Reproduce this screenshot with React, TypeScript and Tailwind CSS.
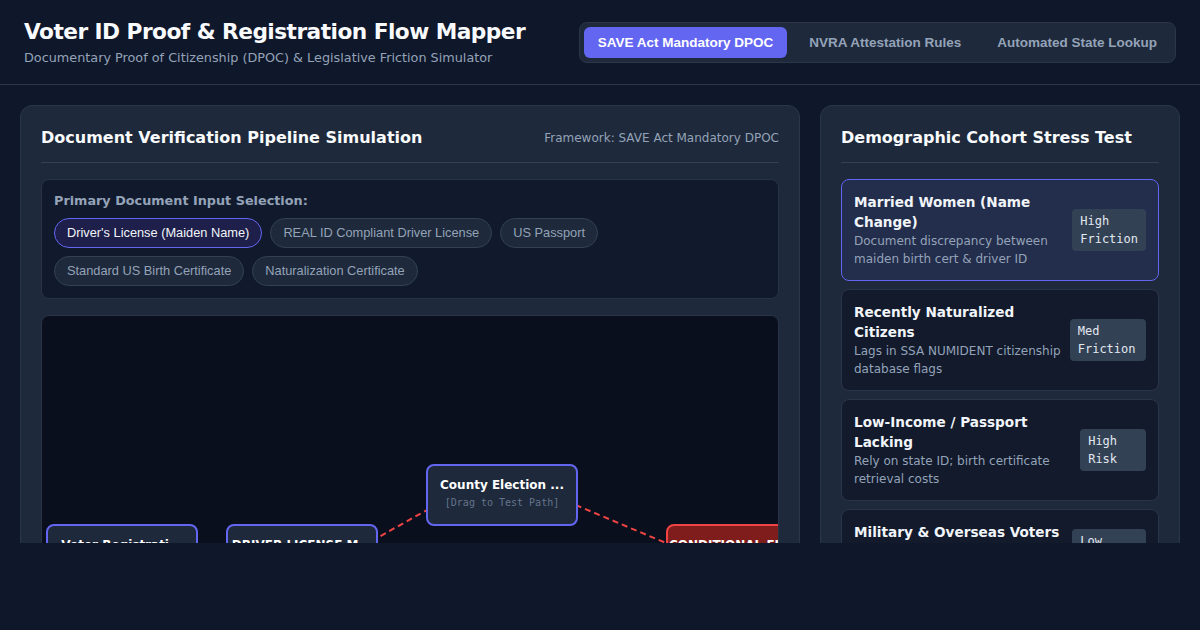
import { useState } from "react";

type Cohort = {
  title: string;
  desc: string;
  badge: string;
};

type FlowNode = {
  id: string;
  label: string;
  left: number;
  top: number;
  flagged?: boolean;
};

const frameworks = ["SAVE Act Mandatory DPOC", "NVRA Attestation Rules", "Automated State Lookup"];

const documents = [
  "Driver's License (Maiden Name)",
  "REAL ID Compliant Driver License",
  "US Passport",
  "Standard US Birth Certificate",
  "Naturalization Certificate",
];

const cohorts: Cohort[] = [
  {
    title: "Married Women (Name Change)",
    desc: "Document discrepancy between maiden birth cert & driver ID",
    badge: "High Friction",
  },
  {
    title: "Recently Naturalized Citizens",
    desc: "Lags in SSA NUMIDENT citizenship database flags",
    badge: "Med Friction",
  },
  {
    title: "Low-Income / Passport Lacking",
    desc: "Rely on state ID; birth certificate retrieval costs",
    badge: "High Risk",
  },
  {
    title: "Military & Overseas Voters",
    desc: "UOCAVA ballots exempt from in-person DPOC checks",
    badge: "Low Friction",
  },
];

const nodes: FlowNode[] = [
  { id: "reg", label: "Voter Registration Form", left: 4, top: 208 },
  { id: "doc", label: "DRIVER LICENSE MAIDEN NAME", left: 184, top: 208 },
  { id: "county", label: "County Election Office", left: 384, top: 148 },
  { id: "flag", label: "CONDITIONAL FLAG / REJECTED", left: 624, top: 208, flagged: true },
];

// straight dashed connectors, drawn under the nodes
const edges = [
  { x1: 80, y1: 264, x2: 260, y2: 264 },
  { x1: 260, y1: 264, x2: 460, y2: 152 },
  { x1: 460, y1: 158, x2: 700, y2: 259 },
];

const shorten = (s: string) => (s.length > 16 ? s.slice(0, 16) + "..." : s);

function FlowCanvas() {
  return (
    <div className="relative mt-4 h-[420px] overflow-hidden rounded-lg border border-[#283346] bg-[#0a0f1d]">
      <svg className="absolute inset-0 h-full w-full">
        {edges.map((e, i) => (
          <line
            key={i}
            x1={e.x1}
            y1={e.y1}
            x2={e.x2}
            y2={e.y2}
            stroke="#ef4444"
            strokeWidth={2}
            strokeDasharray="6 4"
          />
        ))}
      </svg>
      {nodes.map((n) => (
        <div
          key={n.id}
          className={
            n.flagged
              ? "absolute flex h-[62px] w-[152px] flex-col items-center rounded-lg border-2 border-[#ef4444] bg-[#7f1d1d] pt-[10px]"
              : "absolute flex h-[62px] w-[152px] flex-col items-center rounded-lg border-2 border-[#6366f1] bg-[#1e293b] pt-[10px]"
          }
          style={{ left: n.left, top: n.top }}
        >
          <span className="whitespace-nowrap text-[12px] font-bold leading-[18px] text-white">
            {shorten(n.label)}
          </span>
          <span className="mt-0.5 whitespace-nowrap font-['DejaVu_Sans_Mono',monospace] text-[10px] leading-[14px] text-[#64748b]">
            [Drag to Test Path]
          </span>
        </div>
      ))}
    </div>
  );
}

export default function App() {
  const [framework, setFramework] = useState(0);
  const [doc, setDoc] = useState(0);
  const [cohort, setCohort] = useState(0);

  return (
    <div className="h-[630px] w-full bg-[#0f172a] font-['DejaVu_Sans',sans-serif]">
      <div className="h-[543px] overflow-hidden">
        <header className="flex items-center justify-between border-b border-[#2b3648] px-6 py-4">
          <div className="whitespace-nowrap">
            <h1 className="text-[21.7px] font-bold leading-8 tracking-tight text-[#f8fafc]">
              Voter ID Proof &amp; Registration Flow Mapper
            </h1>
            <p className="text-[12.8px] leading-5 text-[#94a3b8]">
              Documentary Proof of Citizenship (DPOC) &amp; Legislative Friction Simulator
            </p>
          </div>
          <div className="flex shrink-0 gap-2 rounded-lg border border-[#2b3648] bg-[#1e293b] p-1 font-['Liberation_Sans',Arial,sans-serif]">
            {frameworks.map((f, i) => (
              <button
                key={f}
                onClick={() => setFramework(i)}
                className={
                  i === framework
                    ? "whitespace-nowrap rounded-md bg-[#6366f1] px-3.5 py-1.5 text-[13.5px] font-bold leading-[19px] text-white"
                    : "whitespace-nowrap rounded-md px-3.5 py-1.5 text-[13.5px] font-bold leading-[19px] text-[#94a3b8]"
                }
              >
                {f}
              </button>
            ))}
          </div>
        </header>

        <main className="flex gap-5 px-5 pt-5">
          <section className="flex-1 rounded-xl border border-[#2b3648] bg-[#1e293b] p-5">
            <div className="flex items-center justify-between border-b border-[#334155] pb-3">
              <h2 className="text-base font-bold leading-6 text-[#f8fafc]">
                Document Verification Pipeline Simulation
              </h2>
              <span className="text-xs text-[#94a3b8]">
                Framework: {frameworks[framework]}
              </span>
            </div>

            <div className="mt-4 rounded-lg border border-[#283346] bg-[#111a2d] p-3">
              <div className="mb-2 text-[12.8px] font-bold leading-[18px] text-[#94a3b8]">
                Primary Document Input Selection:
              </div>
              <div className="flex flex-wrap gap-2 font-['Liberation_Sans',Arial,sans-serif]">
                {documents.map((d, i) => (
                  <button
                    key={d}
                    onClick={() => setDoc(i)}
                    className={
                      i === doc
                        ? "rounded-full border border-[#6366f1] bg-[#1e1f4b] px-3 py-1 text-[12.8px] leading-5 text-[#f1f5f9]"
                        : "rounded-full border border-[#334155] bg-[#1e293b] px-3 py-1 text-[12.8px] leading-5 text-[#94a3b8]"
                    }
                  >
                    {d}
                  </button>
                ))}
              </div>
            </div>

            <FlowCanvas />
          </section>

          <aside className="w-[360px] rounded-xl border border-[#2b3648] bg-[#1e293b] p-5">
            <h2 className="border-b border-[#334155] pb-3 text-base font-bold leading-6 text-[#f8fafc]">
              Demographic Cohort Stress Test
            </h2>
            <div className="mt-4 flex flex-col gap-2">
              {cohorts.map((c, i) => (
                <div
                  key={c.title}
                  onClick={() => setCohort(i)}
                  className={
                    i === cohort
                      ? "flex cursor-pointer items-center justify-between gap-2 rounded-lg border border-[#6366f1] bg-[#232d4c] p-3"
                      : "flex cursor-pointer items-center justify-between gap-2 rounded-lg border border-[#293548] bg-[#121a2c] p-3"
                  }
                >
                  <div>
                    <div className="text-[13.6px] font-bold leading-5 text-[#f1f5f9]">{c.title}</div>
                    <div className="text-xs leading-[18px] text-[#94a3b8]">{c.desc}</div>
                  </div>
                  <span className="rounded bg-[#334155] px-2 py-[3px] font-['DejaVu_Sans_Mono',monospace] text-xs leading-[18px] text-[#e2e8f0]">
                    {c.badge}
                  </span>
                </div>
              ))}
            </div>
          </aside>
        </main>
      </div>
    </div>
  );
}
